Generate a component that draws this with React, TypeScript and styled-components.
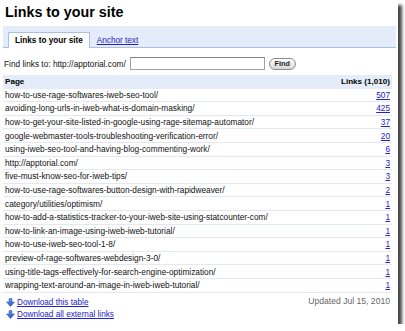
import React from "react";
import styled, { createGlobalStyle } from "styled-components";

const Global = createGlobalStyle`
  html, body { margin: 0; padding: 0; background: #ffffff; }
  body { font-family: "Liberation Sans", Arial, Helvetica, sans-serif; color: #222; }
  * { box-sizing: border-box; }
`;

const Frame = styled.div`
  width: 398px;
  height: 324px;
  background: #fff;
  box-shadow: 4px 5px 3px rgba(0, 0, 0, 0.72);
  display: flex;
  flex-direction: column;
  overflow: hidden;
`;

const Title = styled.h1`
  margin: 4px 0 0 5px;
  font-size: 14.3px;
  line-height: 17px;
  font-weight: bold;
  color: #000;
`;

const TabBar = styled.div`
  margin: 5px 0 0 3px;
  width: 393px;
  height: 22px;
  background: #e5ecf9;
  border-bottom: 1px solid #a8bfe8;
  display: flex;
  align-items: flex-end;
  padding-left: 5px;
`;

const Tab = styled.div<{ $active?: boolean }>`
  height: 16px;
  margin-bottom: -1px;
  padding: 0 6px;
  display: flex;
  align-items: center;
  font-size: 8.2px;
  font-weight: ${(p) => (p.$active ? "bold" : "normal")};
  background: ${(p) => (p.$active ? "#fff" : "transparent")};
  border: 1px solid ${(p) => (p.$active ? "#a8bfe8" : "transparent")};
  border-bottom: none;
  color: ${(p) => (p.$active ? "#000" : "#2222cc")};
  text-decoration: ${(p) => (p.$active ? "none" : "underline")};
`;

const FindRow = styled.div`
  margin-top: 8px;
  height: 15px;
  display: flex;
  align-items: center;
  padding-left: 4px;
  font-size: 8.3px;
  color: #111;
`;

const Input = styled.div`
  margin-left: 4px;
  width: 135px;
  height: 13px;
  border: 1px solid #a0a0a0;
  border-top-color: #808080;
  background: #fff;
`;

const FindButton = styled.div`
  margin-left: 4px;
  width: 27px;
  height: 12px;
  border-radius: 7px;
  border: 1px solid #8c8c8c;
  background: linear-gradient(#ffffff, #d8d8d8);
  font-size: 7.3px;
  font-weight: bold;
  color: #222;
  display: flex;
  align-items: center;
  justify-content: center;
`;

const Table = styled.div`
  margin: 4px 0 0 3px;
  width: 389px;
  display: flex;
  flex-direction: column;
`;

const HeaderRow = styled.div`
  height: 13.6px;
  background: #e5ecf9;
  display: flex;
  align-items: center;
  justify-content: space-between;
  padding: 0 2px;
  font-size: 8.1px;
  font-weight: bold;
  color: #000;
`;

const Row = styled.div`
  height: 13.6px;
  border-bottom: 1px solid #e3e9f4;
  display: flex;
  align-items: center;
  justify-content: space-between;
  padding: 0 2px;
  font-size: 8.3px;
  color: #111;
  white-space: nowrap;
`;

const Count = styled.span`
  color: #2222cc;
  text-decoration: underline;
`;

const Footer = styled.div`
  display: flex;
  justify-content: space-between;
  align-items: flex-start;
  padding: 0 8px 0 6px;
`;

const Downloads = styled.div`
  margin-top: 4px;
  display: flex;
  flex-direction: column;
`;

const DownloadLink = styled.div`
  height: 12px;
  display: flex;
  align-items: center;
  gap: 2px;
  font-size: 8.2px;
  color: #2222cc;
  span { text-decoration: underline; }
`;

const Updated = styled.div`
  margin-top: 2px;
  line-height: 12px;
  font-size: 8.6px;
  color: #666;
`;

const Arrow = () => (
  <svg width="9" height="9" viewBox="0 0 9 9">
    <defs>
      <linearGradient id="ag" x1="0" y1="0" x2="0" y2="1">
        <stop offset="0" stopColor="#6a9be0" />
        <stop offset="1" stopColor="#1f57c3" />
      </linearGradient>
    </defs>
    <path d="M3 0.5 H6 V4 H8.5 L4.5 8.5 L0.5 4 H3 Z" fill="url(#ag)" stroke="#2550a8" strokeWidth="0.5" />
  </svg>
);

const rows: [string, number][] = [
  ["how-to-use-rage-softwares-iweb-seo-tool/", 507],
  ["avoiding-long-urls-in-iweb-what-is-domain-masking/", 425],
  ["how-to-get-your-site-listed-in-google-using-rage-sitemap-automator/", 37],
  ["google-webmaster-tools-troubleshooting-verification-error/", 20],
  ["using-iweb-seo-tool-and-having-blog-commenting-work/", 6],
  ["http://apptorial.com/", 3],
  ["five-must-know-seo-for-iweb-tips/", 3],
  ["how-to-use-rage-softwares-button-design-with-rapidweaver/", 2],
  ["category/utilities/optimism/", 1],
  ["how-to-add-a-statistics-tracker-to-your-iweb-site-using-statcounter-com/", 1],
  ["how-to-link-an-image-using-iweb-iweb-tutorial/", 1],
  ["how-to-use-iweb-seo-tool-1-8/", 1],
  ["preview-of-rage-softwares-webdesign-3-0/", 1],
  ["using-title-tags-effectively-for-search-engine-optimization/", 1],
  ["wrapping-text-around-an-image-in-iweb-iweb-tutorial/", 1],
];

export default function App() {
  return (
    <>
      <Global />
      <Frame>
        <Title>Links to your site</Title>
        <TabBar>
          <Tab $active>Links to your site</Tab>
          <Tab>Anchor text</Tab>
        </TabBar>
        <FindRow>
          Find links to: http://apptorial.com/
          <Input />
          <FindButton>Find</FindButton>
        </FindRow>
        <Table>
          <HeaderRow>
            <span>Page</span>
            <span>Links (1,010)</span>
          </HeaderRow>
          {rows.map(([page, n]) => (
            <Row key={page}>
              <span>{page}</span>
              <Count>{n}</Count>
            </Row>
          ))}
        </Table>
        <Footer>
          <Downloads>
            <DownloadLink>
              <Arrow />
              <span>Download this table</span>
            </DownloadLink>
            <DownloadLink>
              <Arrow />
              <span>Download all external links</span>
            </DownloadLink>
          </Downloads>
          <Updated>Updated Jul 15, 2010</Updated>
        </Footer>
      </Frame>
    </>
  );
}
